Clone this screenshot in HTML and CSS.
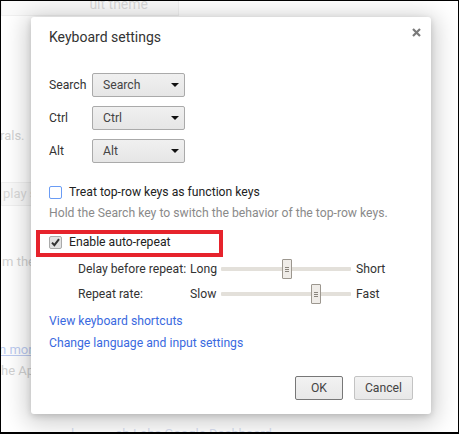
FILE: index.html
```html
<!DOCTYPE html>
<html>
<head>
<meta charset="utf-8">
<link rel="stylesheet" href="styles.css">
</head>
<body>
<div class="page">
  <div class="bg">
    <div class="bg-btn bg-theme">ult theme</div>
    <div class="bg-text bg-rals">rals.</div>
    <div class="bg-btn bg-play">play s</div>
    <div class="bg-text bg-mthe">m the</div>
    <div class="bg-link bg-more">n more</div>
    <div class="bg-text bg-ap">he Ap</div>
    <div class="bg-text bg-dash">l............ab.Labs.Google.Dashboard</div>
  </div>
  <div class="overlay"></div>
  <div class="dialog">
    <div class="title-row">
      <div class="title">Keyboard settings</div>
      <svg class="close" width="9" height="9" viewBox="0 0 9 9"><path d="M1 1 L8 8 M8 1 L1 8" stroke="#7a7a7a" stroke-width="2.2"/></svg>
    </div>
    <div class="remap">
      <div class="remap-row"><span class="remap-label">Search</span><div class="select"><span>Search</span><i class="arrow"></i></div></div>
      <div class="remap-row"><span class="remap-label">Ctrl</span><div class="select"><span>Ctrl</span><i class="arrow"></i></div></div>
      <div class="remap-row"><span class="remap-label">Alt</span><div class="select"><span>Alt</span><i class="arrow"></i></div></div>
    </div>
    <div class="check-row">
      <span class="cb"></span><span class="cb-label">Treat top-row keys as function keys</span>
    </div>
    <div class="hint">Hold the Search key to switch the behavior of the top-row keys.</div>
    <div class="check-row repeat">
      <span class="cb checked"><svg width="11" height="11" viewBox="0 0 11 11"><path d="M2 5.6 L4.4 8.2 L9 2.2" fill="none" stroke="#333" stroke-width="2"/></svg></span><span class="cb-label">Enable auto-repeat</span>
      <div class="highlight"></div>
    </div>
    <div class="slider-grid">
      <span>Delay before repeat:</span><span>Long</span>
      <div class="track"><div class="thumb" style="left:61px"><i></i></div></div>
      <span>Short</span>
      <span>Repeat rate:</span><span>Slow</span>
      <div class="track"><div class="thumb" style="left:90px"><i></i></div></div>
      <span>Fast</span>
    </div>
    <div class="links">
      <a>View keyboard shortcuts</a>
      <a>Change language and input settings</a>
    </div>
    <div class="buttons">
      <button class="btn default">OK</button>
      <button class="btn">Cancel</button>
    </div>
  </div>
</div>
</body>
</html>
```
FILE: styles.css
```css
html, body {
  margin: 0;
  padding: 0;
}
body {
  font-family: Roboto, "Noto Sans", sans-serif;
  font-size: 12.2px;
  line-height: 14px;
  color: #333;
}
.page {
  position: relative;
  width: 459px;
  height: 434px;
  box-sizing: border-box;
  border: 1px solid #000;
  border-bottom-width: 2px;
  overflow: hidden;
  background: #fff;
}
.bg {
  display: flex;
  flex-direction: column;
  color: #9a9a9a;
  font-size: 13px;
  line-height: 15px;
}
.bg-btn {
  border: 1px solid #ddd;
  background: #f4f4f4;
  padding: 0 6px;
  height: 24px;
  line-height: 22px;
  box-sizing: border-box;
  width: 100px;
  text-align: right;
  color: #aaa;
}
.bg-theme { margin-top: -9px; width: 178px; padding-right: 30px; font-size: 14px; flex: none; }
.bg-rals { margin-top: 112px; margin-left: -1px; }
.bg-play { margin-top: 39px; width: 60px; text-align: left; padding-left: 1px; flex: none; }
.bg-mthe { margin-top: 48px; margin-left: 1px; }
.bg-link { margin-top: 73px; color: #6a8de0; text-decoration: underline; margin-left: -2px; }
.bg-ap { margin-top: 6px; }
.bg-dash { margin-top: 48px; color: #aab8e0; margin-left: 70px; }
.overlay {
  position: absolute;
  inset: 0;
  background: rgba(255,255,255,0.55);
}
.dialog {
  position: absolute;
  left: 30px;
  top: 16px;
  width: 400px;
  height: 397px;
  box-sizing: border-box;
  background: #fff;
  border-radius: 3px;
  box-shadow: 0 4px 23px 5px rgba(0,0,0,0.2), 0 2px 6px rgba(0,0,0,0.15);
  padding: 12px 18px 0 18px;
  display: flex;
  flex-direction: column;
}
.title-row {
  display: flex;
  justify-content: space-between;
  align-items: flex-start;
}
.title {
  font-size: 14px;
  line-height: 16px;
  color: #333;
}
.close {
  margin-top: -1px;
  margin-right: -8px;
}
.remap {
  margin-top: 28px;
  display: flex;
  flex-direction: column;
  gap: 9px;
}
.remap-row {
  display: flex;
  align-items: center;
}
.remap-label {
  width: 43px;
}
.select {
  width: 93px;
  height: 24px;
  box-sizing: border-box;
  border: 1px solid #aaa;
  border-radius: 2px;
  background: linear-gradient(#f0f0f0, #e6e6e6);
  display: flex;
  align-items: center;
  justify-content: space-between;
  padding: 0 5px 0 10px;
  color: #444;
}
.arrow {
  width: 0;
  height: 0;
  border-left: 4px solid transparent;
  border-right: 4px solid transparent;
  border-top: 4px solid #111;
}
.check-row {
  position: relative;
  display: flex;
  align-items: center;
  margin-top: 21px;
  height: 16px;
}
.cb {
  width: 13px;
  height: 13px;
  box-sizing: border-box;
  border: 1px solid #6a9cf5;
  border-radius: 2px;
  background: #fff;
  margin-right: 7px;
  display: flex;
  align-items: center;
  justify-content: center;
}
.cb.checked {
  border-color: #aaa;
  background: #e2e2e2;
}
.cb-label { color: #222; }
.hint {
  color: #8a8a8a;
  margin-top: 6px;
}
.check-row.repeat { margin-top: 14px; }
.highlight {
  position: absolute;
  left: -13px;
  top: -4px;
  width: 187px;
  height: 27px;
  box-sizing: border-box;
  border: 4px solid #e6232c;
}
.slider-grid {
  display: grid;
  grid-template-columns: 112px 31px 130px auto;
  grid-auto-rows: 16px;
  align-items: center;
  row-gap: 9px;
  margin-top: 11px;
  margin-left: 29px;
  color: #333;
}
.slider-grid > span:nth-child(4n) { margin-left: 5px; }
.track {
  position: relative;
  height: 4px;
  background: #e3e0da;
  border-radius: 1px;
}
.thumb {
  position: absolute;
  top: -8px;
  width: 10px;
  height: 20px;
  box-sizing: border-box;
  border: 1px solid #9c978f;
  border-radius: 1px;
  background: #efece8;
  display: flex;
  align-items: center;
  justify-content: center;
}
.thumb i {
  width: 4px;
  height: 5px;
  border-top: 1px solid #8a857d;
  border-bottom: 1px solid #8a857d;
  box-sizing: border-box;
  position: relative;
}
.thumb i::after {
  content: "";
  position: absolute;
  left: 0;
  top: 1px;
  width: 4px;
  height: 1px;
  background: #8a857d;
}
.links {
  display: flex;
  flex-direction: column;
  gap: 8px;
  margin-top: 12px;
}
.links a {
  color: #3a6ae0;
  cursor: pointer;
}
.buttons {
  margin-top: auto;
  margin-bottom: 14px;
  display: flex;
  justify-content: flex-end;
  gap: 11px;
}
.btn {
  font-family: Roboto, "Noto Sans", sans-serif;
  font-size: 12.2px;
  color: #444;
  height: 24px;
  border: 1px solid #c3c3c3;
  border-radius: 2px;
  background: linear-gradient(#f2f2f2, #e8e8e8);
  padding: 0;
  width: 48px;
}
.btn.default {
  border-color: #777;
}
.btn:not(.default) { width: 59px; }
```
